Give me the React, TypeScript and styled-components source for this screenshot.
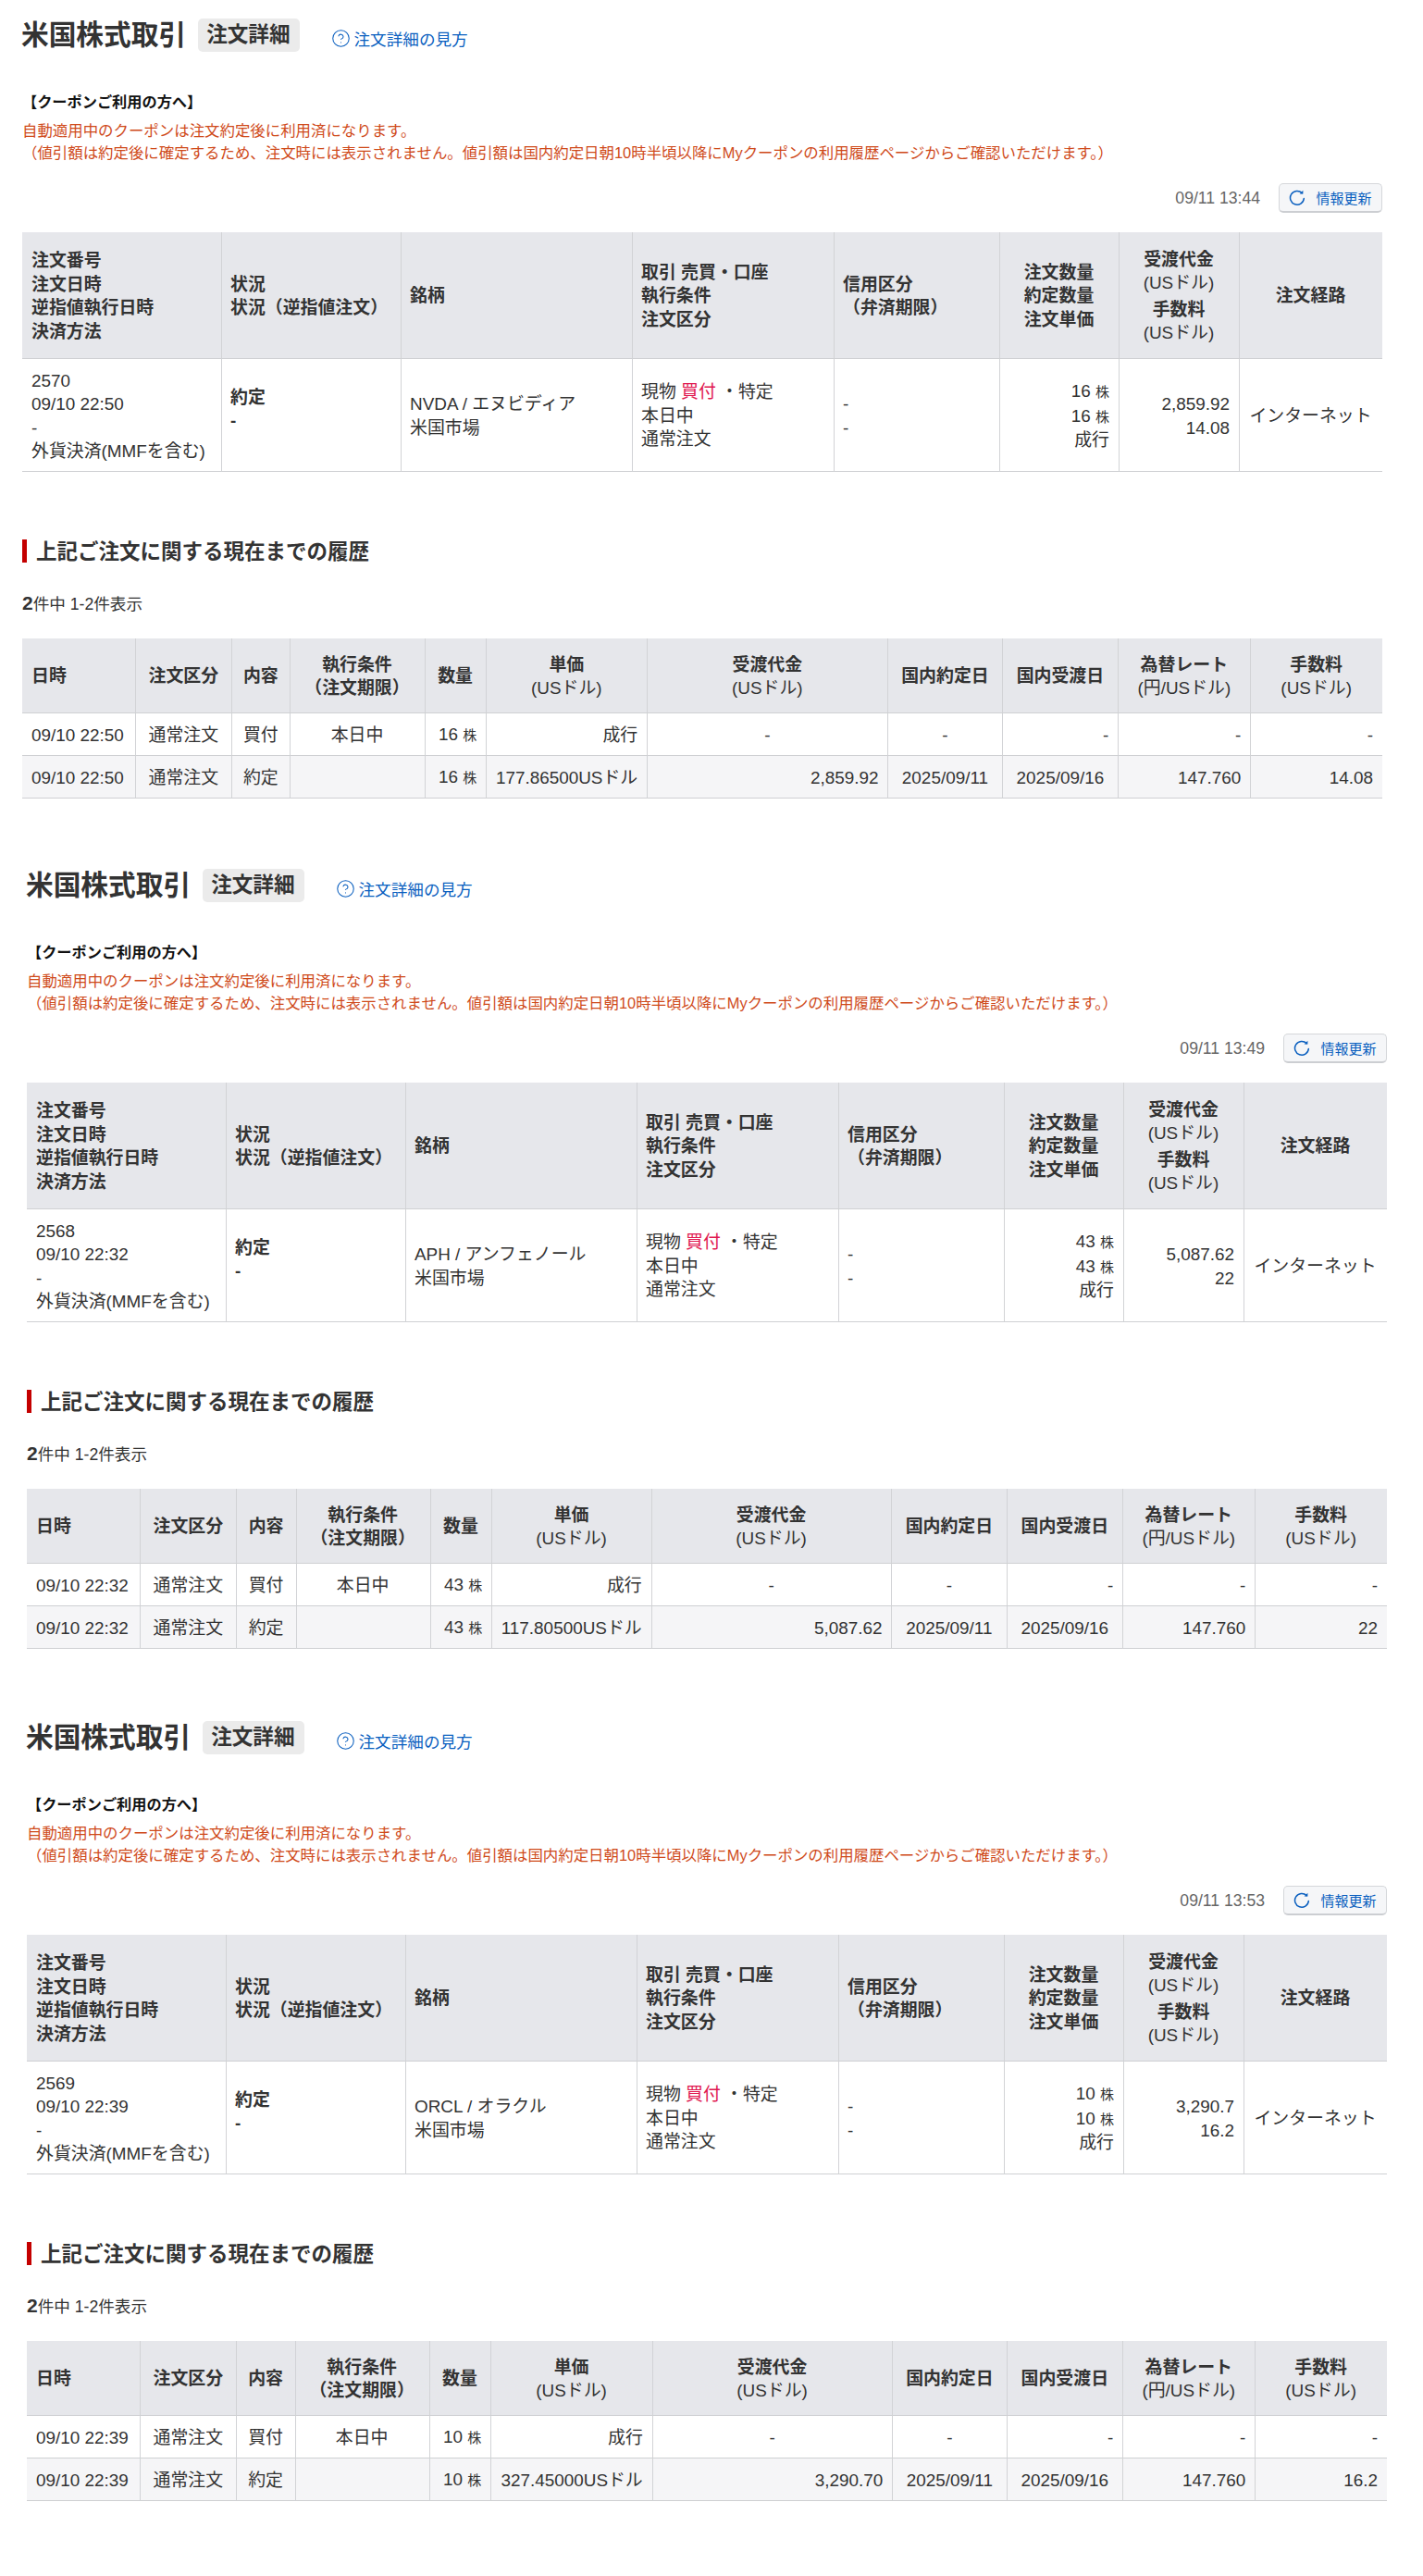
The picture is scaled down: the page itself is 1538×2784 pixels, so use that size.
import React from "react";
import styled, { createGlobalStyle } from "styled-components";
import { CircleHelp } from "lucide-react";

interface OrderData {
  offsetLeft: number;
  bottomGap: number;
  updatedAt: string;
  orderNo: string;
  dateTime: string;
  name: string;
  qty: number;
  amount: string;
  settled: string;
  fee: string;
  price: string;
  historyCols: number[];
}

const orders: OrderData[] = [
  {
    offsetLeft: 24,
    bottomGap: 56,
    updatedAt: "09/11 13:44",
    orderNo: "2570",
    dateTime: "09/10 22:50",
    name: "NVDA / エヌビディア",
    qty: 16,
    amount: "2,859.92",
    settled: "2,859.92",
    fee: "14.08",
    price: "177.86500USドル",
    historyCols: [122.3, 104.1, 62.9, 145.4, 66.7, 173.9, 260.2, 124, 124.9, 143, 142.6],
  },
  {
    offsetLeft: 29,
    bottomGap: 58,
    updatedAt: "09/11 13:49",
    orderNo: "2568",
    dateTime: "09/10 22:32",
    name: "APH / アンフェノール",
    qty: 43,
    amount: "5,087.62",
    settled: "5,087.62",
    fee: "22",
    price: "117.80500USドル",
    historyCols: [122.3, 104.1, 64.3, 144.9, 66.8, 172.3, 259.8, 124.9, 124.9, 143, 142.7],
  },
  {
    offsetLeft: 29,
    bottomGap: 81,
    updatedAt: "09/11 13:53",
    orderNo: "2569",
    dateTime: "09/10 22:39",
    name: "ORCL / オラクル",
    qty: 10,
    amount: "3,290.7",
    settled: "3,290.70",
    fee: "16.2",
    price: "327.45000USドル",
    historyCols: [122.3, 104.1, 63.3, 144.9, 66.8, 174.4, 259.6, 124, 124.9, 143, 142.7],
  },
];

const summaryCols = [215, 194, 250, 218, 179, 129, 130, 155];

const RefreshIcon = () => (
  <svg width="18" height="18" viewBox="0 0 18 18" fill="none">
    <path
      d="M14.2 3.6A7.4 7.4 0 1 0 16.3 9.6"
      stroke="#0a5fbf"
      strokeWidth="1.5"
      strokeLinecap="round"
    />
    <path d="M15.4 0.8v3.8h-3.8z" fill="#0a5fbf" />
  </svg>
);

const Share = ({ n }: { n: number }) => (
  <>
    {n} <Unit>株</Unit>
  </>
);

const OrderBlock: React.FC<{ data: OrderData }> = ({ data }) => {
  const { qty, dateTime } = data;
  return (
    <Block $left={data.offsetLeft} $bottom={data.bottomGap}>
      <TitleRow>
        <Title>米国株式取引</Title>
        <Tag>注文詳細</Tag>
        <HelpLink href="#">
          <CircleHelp size={21} strokeWidth={1.2} />
          注文詳細の見方
        </HelpLink>
      </TitleRow>

      <CouponHead>【クーポンご利用の方へ】</CouponHead>
      <CouponNote>
        自動適用中のクーポンは注文約定後に利用済になります。
        <br />
        （値引額は約定後に確定するため、注文時には表示されません。値引額は国内約定日朝10時半頃以降にMyクーポンの利用履歴ページからご確認いただけます。）
      </CouponNote>

      <UpdateRow>
        <UpdatedAt>{data.updatedAt}</UpdatedAt>
        <RefreshButton>
          <RefreshIcon />
          情報更新
        </RefreshButton>
      </UpdateRow>

      <Table>
        <colgroup>
          {summaryCols.map((w, i) => (
            <Col key={i} $w={w} />
          ))}
        </colgroup>
        <thead>
          <Row $h={137}>
            <Th $align="left">
              注文番号
              <br />
              注文日時
              <br />
              逆指値執行日時
              <br />
              決済方法
            </Th>
            <Th $align="left">
              状況
              <br />
              状況（逆指値注文）
            </Th>
            <Th $align="left">銘柄</Th>
            <Th $align="left">
              取引 売買・口座
              <br />
              執行条件
              <br />
              注文区分
            </Th>
            <Th $align="left">
              信用区分
              <br />
              （弁済期限）
            </Th>
            <Th>
              注文数量
              <br />
              約定数量
              <br />
              注文単価
            </Th>
            <Th>
              受渡代金
              <Sub>(USドル)</Sub>
              <FeeHead>手数料</FeeHead>
              <Sub>(USドル)</Sub>
            </Th>
            <Th>注文経路</Th>
          </Row>
        </thead>
        <tbody>
          <Row $h={122}>
            <Td>
              {data.orderNo}
              <br />
              {dateTime}
              <br />-
              <br />
              外貨決済(MMFを含む)
            </Td>
            <Td>
              <StatusBox>
                約定
                <br />-
              </StatusBox>
            </Td>
            <Td>
              {data.name}
              <br />
              米国市場
            </Td>
            <Td>
              現物 <Buy>買付</Buy> ・特定
              <br />
              本日中
              <br />
              通常注文
            </Td>
            <Td>
              -
              <br />-
            </Td>
            <Td $align="right">
              <Share n={qty} />
              <br />
              <Share n={qty} />
              <br />
              成行
            </Td>
            <Td $align="right">
              {data.amount}
              <br />
              {data.fee}
            </Td>
            <Td $align="center">インターネット</Td>
          </Row>
        </tbody>
      </Table>

      <HistoryHeading>上記ご注文に関する現在までの履歴</HistoryHeading>
      <Count>
        <strong>2</strong>件中 1-2件表示
      </Count>

      <Table>
        <colgroup>
          {data.historyCols.map((w, i) => (
            <Col key={i} $w={w} />
          ))}
        </colgroup>
        <thead>
          <Row $h={81}>
            <Th $align="left">日時</Th>
            <Th>注文区分</Th>
            <Th>内容</Th>
            <Th>
              執行条件
              <br />
              （注文期限）
            </Th>
            <Th>数量</Th>
            <Th>
              単価
              <Sub>(USドル)</Sub>
            </Th>
            <Th>
              受渡代金
              <Sub>(USドル)</Sub>
            </Th>
            <Th>国内約定日</Th>
            <Th>国内受渡日</Th>
            <Th>
              為替レート
              <Sub>(円/USドル)</Sub>
            </Th>
            <Th>
              手数料
              <Sub>(USドル)</Sub>
            </Th>
          </Row>
        </thead>
        <tbody>
          <Row $h={46}>
            <Td>{dateTime}</Td>
            <Td $align="center">通常注文</Td>
            <Td $align="center">買付</Td>
            <Td $align="center">本日中</Td>
            <Td $align="right">
              <Share n={qty} />
            </Td>
            <Td $align="right">成行</Td>
            <Td $align="center">-</Td>
            <Td $align="center">-</Td>
            <Td $align="right">-</Td>
            <Td $align="right">-</Td>
            <Td $align="right">-</Td>
          </Row>
          <Row $h={46} $alt>
            <Td>{dateTime}</Td>
            <Td $align="center">通常注文</Td>
            <Td $align="center">約定</Td>
            <Td />
            <Td $align="right">
              <Share n={qty} />
            </Td>
            <Td $align="right">{data.price}</Td>
            <Td $align="right">{data.settled}</Td>
            <Td $align="center">2025/09/11</Td>
            <Td $align="center">2025/09/16</Td>
            <Td $align="right">147.760</Td>
            <Td $align="right">{data.fee}</Td>
          </Row>
        </tbody>
      </Table>
    </Block>
  );
};

const App: React.FC = () => (
  <>
    <GlobalStyle />
    {orders.map((o) => (
      <OrderBlock key={o.orderNo} data={o} />
    ))}
  </>
);

export default App;

const GlobalStyle = createGlobalStyle`
  html, body {
    margin: 0;
    background: #fff;
    color: #333;
    font-family: "Liberation Sans", "Noto Sans CJK JP", sans-serif;
  }
`;

const Block = styled.section<{ $left: number; $bottom: number }>`
  width: 1470px;
  padding: 20px 0 ${(p) => p.$bottom}px ${(p) => p.$left}px;
`;

const TitleRow = styled.div`
  display: flex;
  align-items: center;
  height: 36px;
`;

const Title = styled.h1`
  margin: -1px 0 0 -1px;
  font-size: 29.7px;
  line-height: 36px;
  font-weight: 700;
  color: #333;
`;

const Tag = styled.span`
  margin-left: 13px;
  padding: 0 10px 0 9px;
  height: 36px;
  line-height: 35px;
  font-size: 22.6px;
  font-weight: 700;
  background: #ebebeb;
  border-radius: 5px;
`;

const HelpLink = styled.a`
  display: flex;
  align-items: center;
  gap: 4px;
  margin: 7px 0 0 34px;
  font-size: 17.6px;
  color: #0a5fbf;
  text-decoration: none;
`;

const CouponHead = styled.div`
  margin-top: 42px;
  font-size: 16.2px;
  line-height: 24px;
  font-weight: 700;
  color: #111;
`;

const CouponNote = styled.p`
  margin: 7px 0 0;
  font-size: 16.43px;
  line-height: 24px;
  color: #cf4a1a;
  white-space: nowrap;
`;

const UpdateRow = styled.div`
  display: flex;
  justify-content: flex-end;
  align-items: center;
  gap: 20px;
  margin: 21px 0;
  height: 32px;
`;

const UpdatedAt = styled.span`
  font-size: 17.6px;
  color: #666;
`;

const RefreshButton = styled.button`
  display: flex;
  align-items: center;
  justify-content: center;
  gap: 11px;
  width: 112px;
  height: 32px;
  padding: 0;
  background: #f5f6f8;
  border: 1px solid #d5d7da;
  border-bottom: 2px solid #ccced2;
  border-radius: 5px;
  font: inherit;
  font-size: 15px;
  color: #0a5fbf;
`;

const Table = styled.table`
  width: 1470px;
  table-layout: fixed;
  border-collapse: separate;
  border-spacing: 0;
  font-size: 18.9px;
  line-height: 25.5px;
  color: #333;
`;

const Col = styled.col<{ $w: number }>`
  width: ${(p) => p.$w}px;
`;

const Row = styled.tr<{ $h: number; $alt?: boolean }>`
  height: ${(p) => p.$h}px;
  background: ${(p) => (p.$alt ? "#f5f5f7" : "#fff")};
`;

const Th = styled.th<{ $align?: string }>`
  padding: 2px 10px 0 9px;
  background: #e6e7eb;
  font-weight: 700;
  text-align: ${(p) => p.$align || "center"};
  white-space: nowrap;
  vertical-align: middle;
  border-left: 1px solid #d2d3d6;
  border-bottom: 1px solid #cfd0d3;
  &:first-child {
    border-left: 0;
    padding-left: 10px;
  }
`;

const Td = styled.td<{ $align?: string }>`
  padding: 2px 10px 0 9px;
  text-align: ${(p) => p.$align || "left"};
  white-space: nowrap;
  vertical-align: middle;
  border-left: 1px solid #d2d3d6;
  border-bottom: 1px solid #cfd0d3;
  &:first-child {
    border-left: 0;
    padding-left: 10px;
  }
`;

const Sub = styled.span`
  display: block;
  font-weight: 400;
`;

const FeeHead = styled.span`
  display: block;
  margin-top: 3px;
`;

const StatusBox = styled.div`
  padding-bottom: 15px;
  font-weight: 700;
`;

const Buy = styled.span`
  color: #e0174f;
`;

const Unit = styled.span`
  font-size: 15px;
`;

const HistoryHeading = styled.h2`
  margin: 73px 0 0;
  padding-left: 10px;
  height: 25px;
  border-left: 5px solid #c40000;
  font-size: 22.5px;
  line-height: 27px;
  font-weight: 700;
  color: #333;
`;

const Count = styled.div`
  height: 24px;
  margin: 33px 0 25px;
  font-size: 17.6px;
  line-height: 24px;
  strong {
    font-size: 21px;
    line-height: 20px;
  }
`;
